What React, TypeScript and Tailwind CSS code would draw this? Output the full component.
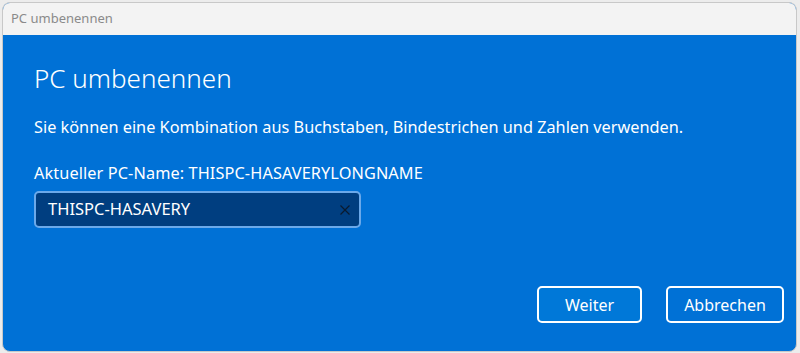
import React from "react";

export default function App() {
  return (
    <div
      className="h-[353px] w-[800px] bg-[#ececec] p-[2px] pr-[3px] pb-[1px]"
      style={{ fontFamily: '"Noto Sans", "Open Sans", sans-serif' }}
    >
      <div className="flex h-full flex-col overflow-hidden rounded-[8px] border border-[#c8c8c8] bg-[#0071d6]">
        <div className="flex h-[32px] shrink-0 items-center bg-[#f3f3f3] px-[8px] text-[13px] text-[#8a8a8a]">
          PC umbenennen
        </div>
        <div className="flex flex-1 flex-col px-[31px] text-white">
          <h1 className="mt-[25px] text-[26px] leading-[36px] font-light">
            PC umbenennen
          </h1>
          <p className="mt-[20px] text-[16.3px] leading-[22px]">
            Sie können eine Kombination aus Buchstaben, Bindestrichen und Zahlen
            verwenden.
          </p>
          <p className="mt-[24px] text-[16.3px] leading-[22px] tracking-[0.1px]">
            Aktueller PC-Name: THISPC-HASAVERYLONGNAME
          </p>
          <div className="mt-[7px] flex h-[37px] w-[327px] items-center justify-between rounded-[5px] border-2 border-[#6ba9ea] bg-[#003e80] pr-[8px] pl-[12px]">
            <span className="text-[16.5px]">THISPC-HASAVERY</span>
            <svg width="12" height="12" viewBox="0 0 12 12" className="text-[#0a1a2e]">
              <path d="M1.5 1.5 L10.5 10.5 M10.5 1.5 L1.5 10.5" stroke="currentColor" strokeWidth="1.2" />
            </svg>
          </div>
          <div className="mt-auto mb-[28px] flex justify-end gap-[24px]">
            <button className="h-[37px] w-[105px] rounded-[5px] border-2 border-white bg-[#0078d8] text-[16px]">
              Weiter
            </button>
            <button className="mr-[-19px] h-[37px] w-[118px] rounded-[5px] border-2 border-white text-[16px]">
              Abbrechen
            </button>
          </div>
        </div>
      </div>
    </div>
  );
}
